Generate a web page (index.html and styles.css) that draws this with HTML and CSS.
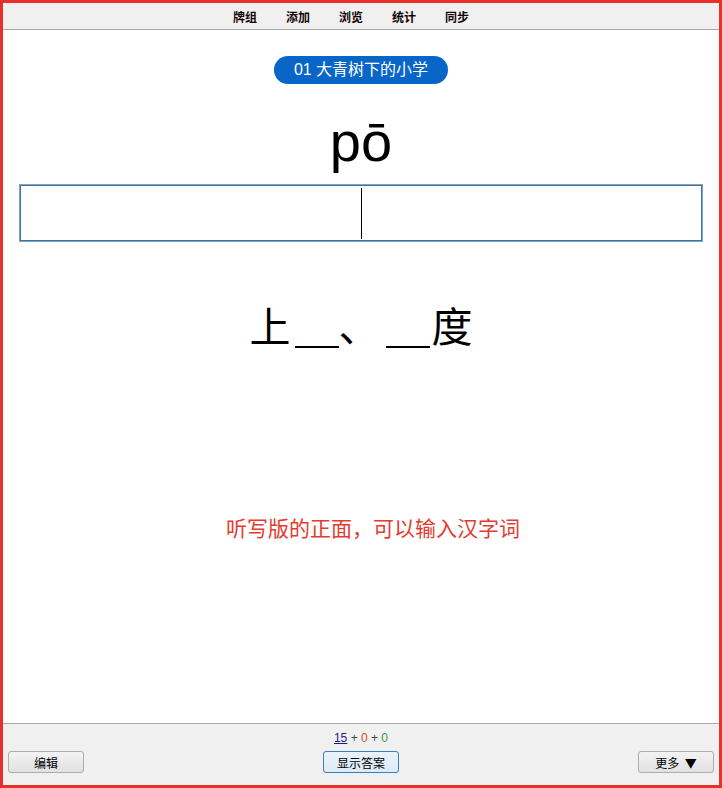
FILE: index.html
```html
<!DOCTYPE html>
<html lang="zh-CN">
<head>
	<meta charset="UTF-8">
	<title>听写</title>
	<link rel="stylesheet" href="styles.css">
</head>
<body>
	<div class="frame">
		<div class="topbar">
			<ul class="menu">
				<li>牌组</li>
				<li>添加</li>
				<li>浏览</li>
				<li>统计</li>
				<li>同步</li>
			</ul>
		</div>
		<div class="card">
			<div class="deck">01 大青树下的小学</div>
			<div class="pinyin">pō</div>
			<div class="answer"><span class="caret"></span></div>
			<div class="words">上<span class="blank"></span><span class="dun">、</span><span class="blank blank2"></span><span class="last">度</span></div>
			<p class="note">听写版的正面，可以输入汉字词</p>
		</div>
		<div class="bottombar">
			<div class="count"><a class="new">15</a> + <span class="learn">0</span> + <span class="review">0</span></div>
			<div class="actions">
				<button class="btn edit">编辑</button>
				<button class="btn show">显示答案</button>
				<button class="btn more">更多&nbsp;&nbsp;▼</button>
			</div>
		</div>
	</div>
</body>
</html>
```
FILE: styles.css
```css
*{margin: 0;padding: 0;}
body{
	font-family: "Liberation Sans", "Noto Sans CJK SC", sans-serif;
	background-color: #fff;
}
li{
	list-style: none;
}
.frame{
	box-sizing: border-box;
	height: 788px;
	border: 3px solid #e8302a;
	display: flex;
	flex-direction: column;
}
.topbar{
	height: 26px;
	background-color: #f0f0f0;
	border-bottom: 1px solid #a8a8a8;
	display: flex;
	justify-content: center;
	align-items: center;
}
.menu{
	display: flex;
	gap: 29px;
	padding-right: 20px;
	font-size: 12px;
	font-weight: bold;
	color: #140606;
}
.card{
	flex: 1;
	text-align: center;
	overflow: hidden;
}
.deck{
	display: inline-block;
	margin-top: 26px;
	height: 28px;
	line-height: 28px;
	padding: 0 20px;
	border-radius: 14px;
	background-color: #0866c9;
	color: #fff;
	font-size: 16px;
}
.pinyin{
	margin-top: 30px;
	font-size: 56px;
	line-height: 56px;
	color: #000;
}
.answer{
	box-sizing: border-box;
	margin: 14px 16px 0;
	height: 58px;
	border: 1px solid #8aa2b8;
	box-shadow: inset 0 0 0 1px #3677a8;
	display: flex;
	justify-content: center;
	align-items: center;
}
.caret{
	width: 1px;
	height: 51px;
	background-color: #000;
}
.words{
	margin-top: 54px;
	height: 56px;
	line-height: 56px;
	font-size: 41px;
	font-family: "Noto Sans CJK SC", serif;
	color: #000;
}
.blank{
	display: inline-block;
	width: 44px;
	height: 2px;
	margin-left: 4px;
	background-color: #000;
	vertical-align: -6px;
}
.blank2{
	margin-left: 6px;
}
.last{
	margin-left: 2px;
}
.note{
	margin-top: 160px;
	padding-left: 24px;
	font-size: 21px;
	color: #e53a2f;
	font-family: "Noto Sans CJK SC", sans-serif;
}
.bottombar{
	height: 62px;
	background-color: #f0f0f0;
	border-top: 1px solid #a8a8a8;
	box-sizing: border-box;
	padding: 6px 5px 0;
}
.count{
	text-align: center;
	font-size: 12px;
	line-height: 16px;
	color: #444;
}
.count .new{
	color: #1a1a80;
	text-decoration: underline;
}
.count .learn{
	color: #c8561f;
}
.count .review{
	color: #2e9e2e;
}
.actions{
	margin-top: 5px;
	display: grid;
	grid-template-columns: 1fr auto 1fr;
	align-items: center;
}
.btn{
	width: 76px;
	height: 22px;
	font-size: 12px;
	font-family: "Noto Sans CJK SC", sans-serif;
	color: #000;
	border: 1px solid #adadad;
	border-radius: 3px;
	background: linear-gradient(#f3f3f3, #e1e1e1);
}
.btn.edit{
	justify-self: start;
}
.btn.show{
	border-color: #3c7fb1;
	background: linear-gradient(#eaf3fb, #dcebf8);
}
.btn.more{
	justify-self: end;
}
```
